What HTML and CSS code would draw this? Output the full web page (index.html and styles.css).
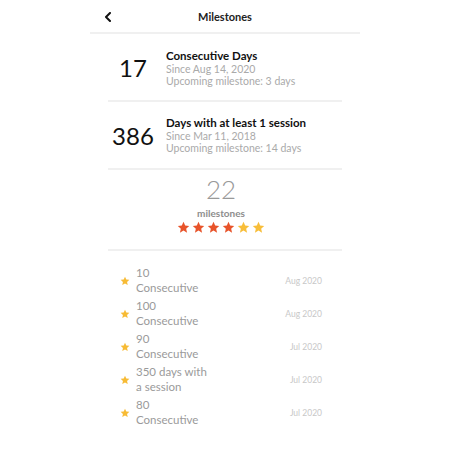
FILE: index.html
```html
<!DOCTYPE html>
<html>
<head>
<meta charset="utf-8">
<link rel="stylesheet" href="styles.css">
</head>
<body>
<div class="screen">
  <header class="topbar">
    <svg class="back" width="8" height="10" viewBox="0 0 8 10"><path d="M6 1 L2 5 L6 9" fill="none" stroke="#111" stroke-width="2" stroke-linecap="round" stroke-linejoin="round"/></svg>
    <div class="title">Milestones</div>
  </header>
  <section class="stat first">
    <div class="num">17</div>
    <div class="info">
      <div class="label">Consecutive Days</div>
      <div class="sub">Since Aug 14, 2020</div>
      <div class="sub">Upcoming milestone: 3 days</div>
    </div>
  </section>
  <section class="stat">
    <div class="num">386</div>
    <div class="info">
      <div class="label">Days with at least 1 session</div>
      <div class="sub">Since Mar 11, 2018</div>
      <div class="sub">Upcoming milestone: 14 days</div>
    </div>
  </section>
  <section class="summary">
    <div class="count">22</div>
    <div class="caption">milestones</div>
    <div class="stars">
      <svg viewBox="0 0 24 24" class="red"><path d="M12 1.5l3.1 6.9 7.4.7-5.6 5 1.7 7.4L12 17.7l-6.6 3.8 1.7-7.4-5.6-5 7.4-.7z"/></svg>
      <svg viewBox="0 0 24 24" class="red"><path d="M12 1.5l3.1 6.9 7.4.7-5.6 5 1.7 7.4L12 17.7l-6.6 3.8 1.7-7.4-5.6-5 7.4-.7z"/></svg>
      <svg viewBox="0 0 24 24" class="red"><path d="M12 1.5l3.1 6.9 7.4.7-5.6 5 1.7 7.4L12 17.7l-6.6 3.8 1.7-7.4-5.6-5 7.4-.7z"/></svg>
      <svg viewBox="0 0 24 24" class="red"><path d="M12 1.5l3.1 6.9 7.4.7-5.6 5 1.7 7.4L12 17.7l-6.6 3.8 1.7-7.4-5.6-5 7.4-.7z"/></svg>
      <svg viewBox="0 0 24 24" class="gold"><path d="M12 1.5l3.1 6.9 7.4.7-5.6 5 1.7 7.4L12 17.7l-6.6 3.8 1.7-7.4-5.6-5 7.4-.7z"/></svg>
      <svg viewBox="0 0 24 24" class="gold"><path d="M12 1.5l3.1 6.9 7.4.7-5.6 5 1.7 7.4L12 17.7l-6.6 3.8 1.7-7.4-5.6-5 7.4-.7z"/></svg>
    </div>
  </section>
  <ul class="list">
    <li class="item">
      <svg viewBox="0 0 24 24" class="istar"><path d="M12 1.5l3.1 6.9 7.4.7-5.6 5 1.7 7.4L12 17.7l-6.6 3.8 1.7-7.4-5.6-5 7.4-.7z"/></svg>
      <div class="itext">10<br>Consecutive</div>
      <div class="date">Aug 2020</div>
    </li>
    <li class="item">
      <svg viewBox="0 0 24 24" class="istar"><path d="M12 1.5l3.1 6.9 7.4.7-5.6 5 1.7 7.4L12 17.7l-6.6 3.8 1.7-7.4-5.6-5 7.4-.7z"/></svg>
      <div class="itext">100<br>Consecutive</div>
      <div class="date">Aug 2020</div>
    </li>
    <li class="item">
      <svg viewBox="0 0 24 24" class="istar"><path d="M12 1.5l3.1 6.9 7.4.7-5.6 5 1.7 7.4L12 17.7l-6.6 3.8 1.7-7.4-5.6-5 7.4-.7z"/></svg>
      <div class="itext">90<br>Consecutive</div>
      <div class="date">Jul 2020</div>
    </li>
    <li class="item">
      <svg viewBox="0 0 24 24" class="istar"><path d="M12 1.5l3.1 6.9 7.4.7-5.6 5 1.7 7.4L12 17.7l-6.6 3.8 1.7-7.4-5.6-5 7.4-.7z"/></svg>
      <div class="itext">350 days with<br>a session</div>
      <div class="date">Jul 2020</div>
    </li>
    <li class="item">
      <svg viewBox="0 0 24 24" class="istar"><path d="M12 1.5l3.1 6.9 7.4.7-5.6 5 1.7 7.4L12 17.7l-6.6 3.8 1.7-7.4-5.6-5 7.4-.7z"/></svg>
      <div class="itext">80<br>Consecutive</div>
      <div class="date">Jul 2020</div>
    </li>
  </ul>
</div>
</body>
</html>
```
FILE: styles.css
```css
html, body {
  margin: 0;
  padding: 0;
  background: #fff;
}
body {
  font-family: Lato, "Open Sans", sans-serif;
  color: #111;
}
.screen {
  width: 270px;
  margin: 0 auto;
}
.topbar {
  position: relative;
  height: 32px;
  border-bottom: 2px solid #f0f0f0;
  display: flex;
  align-items: center;
  justify-content: center;
}
.back {
  position: absolute;
  left: 14px;
  top: 12px;
}
.title {
  font-size: 11px;
  font-weight: 700;
  color: #222;
}
.stat {
  margin: 0 18px;
  height: 66px;
  border-bottom: 2px solid #f0f0f0;
  display: flex;
  align-items: center;
}
.stat.first .info {
  padding-top: 3px;
}
.num {
  width: 50px;
  text-align: center;
  font-size: 24px;
  color: #111;
  margin-right: 8px;
}
.info {
  line-height: 12px;
}
.label {
  font-size: 11.5px;
  font-weight: 700;
  color: #111;
  margin-bottom: 1px;
}
.sub {
  font-size: 10.5px;
  color: #aaa;
}
.summary {
  margin: 0 18px;
  padding-right: 8px;
  height: 79px;
  border-bottom: 2px solid #f0f0f0;
  display: flex;
  flex-direction: column;
  align-items: center;
}
.count {
  font-size: 26px;
  font-weight: 300;
  color: #999;
  line-height: 24px;
  margin-top: 7px;
}
.caption {
  font-size: 10px;
  font-weight: 700;
  color: #8d8d8d;
  margin-top: 6px;
  line-height: 12px;
}
.stars {
  display: flex;
  gap: 2px;
  margin-top: 2px;
}
.stars svg {
  width: 13px;
  height: 13px;
}
.red { fill: #e8542b; }
.gold { fill: #f8be3a; }
.list {
  list-style: none;
  margin: 0;
  padding: 12px 38px 0 30px;
}
.item {
  display: flex;
  align-items: center;
  height: 33px;
}
.istar {
  width: 10px;
  height: 10px;
  fill: #f7bb35;
  margin-right: 6px;
  margin-top: 3px;
}
.itext {
  flex: 1;
  font-size: 11.5px;
  line-height: 15px;
  color: #9a9a9a;
}
.date {
  font-size: 8.5px;
  color: #c8c8c8;
  margin-top: 2px;
}
```
